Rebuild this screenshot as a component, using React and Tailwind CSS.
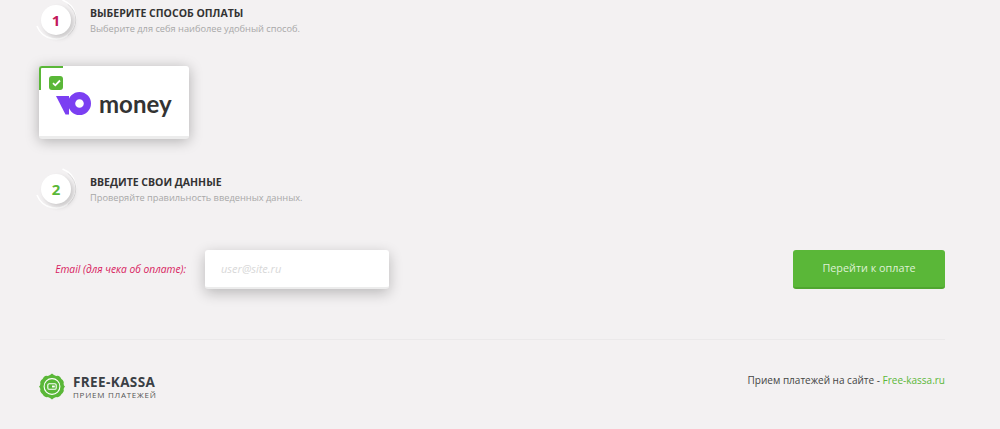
const StepBadge = ({ num, color }) => (
  <div className="relative w-[42px] h-[42px] flex items-center justify-center shrink-0">
    <svg className="absolute inset-0" width="42" height="42" viewBox="0 0 42 42" fill="none">
      <path d="M28 1.300A20 20 0 1 1 2.200 27.500" stroke="#ffffff" strokeWidth="1.500" strokeLinecap="round" />
      <path d="M33 5.500A19 19 0 0 1 33 36.500" stroke="#dedcdd" strokeWidth="1" strokeLinecap="round" />
    </svg>
    <div className={`relative w-[30px] h-[30px] rounded-full bg-white flex items-center justify-center text-[15px] font-bold shadow-[3px_3px_5px_rgba(0,0,0,0.16)] ${color}`}>
      {num}
    </div>
  </div>
)

const StepTitle = ({ num, color, title, text }) => (
  <div className="flex items-start">
    <StepBadge num={num} color={color} />
    <div className="ml-[13px] pt-[6px]">
      <div className="text-[10.500px] leading-[16.500px] font-bold text-[#333333] uppercase">{title}</div>
      <div className="text-[9.250px] leading-[14px] text-[#a8a8a8]">{text}</div>
    </div>
  </div>
)

const MoneyCard = () => (
  <div className="relative w-[150px] h-[73px] bg-white rounded-[3px] border-b-[3px] border-[#ececec] shadow-[0_2px_14px_rgba(0,0,0,0.28)] flex items-center pl-[17px] pt-[5px]">
    <div className="absolute left-0 top-0 w-[24px] h-[24px] border-t-[2px] border-l-[2px] border-[#5ab738] rounded-tl-[3px]" />
    <div className="absolute left-[10px] top-[10px] w-[14px] h-[14px] rounded-[3px] bg-[#5ab738] flex items-center justify-center">
      <svg width="9" height="8" viewBox="0 0 9 8" fill="none">
        <path d="M1 4.200L3.300 6.300L8 1.500" stroke="#ffffff" strokeWidth="1.800" />
      </svg>
    </div>
    <svg width="35" height="23" viewBox="0 0 35 23" className="shrink-0">
      <path d="M0 4H13V22.500H9.500L0 4Z" fill="#7b3ff2" />
      <path d="M23.500 0A11.500 11.500 0 1 1 23.500 23A11.500 11.500 0 0 1 23.500 0ZM23.500 7.200A4.300 4.300 0 1 0 23.500 15.800A4.300 4.300 0 0 0 23.500 7.200Z" fill="#7b3ff2" fillRule="evenodd" />
    </svg>
    <span className="ml-[8px] text-[24px] leading-[25px] font-bold text-[#333333] font-['Lato',sans-serif]">money</span>
  </div>
)

const KassaLogo = () => (
  <svg width="26" height="27" viewBox="0 0 28 28" className="shrink-0">
    <path d="M14 0Q16 2.200 18.500 2.600Q21 1.800 23 4Q24 6 25.500 7Q27.500 9.500 26.500 11Q26.500 13 28 14Q26.500 15.500 26.500 17Q27.500 19 25.500 21Q24 22 23 24Q21 26.200 18.500 25.400Q16 26 14 28Q12 26 9.500 25.400Q7 26.200 5 24Q4 22 2.500 21Q0.500 19 1.500 17Q1.500 15.500 0 14Q1.500 13 1.500 11Q0.500 9.500 2.500 7Q4 6 5 4Q7 1.800 9.500 2.600Q12 2.200 14 0Z" fill="#5ab738" />
    <circle cx="14" cy="14" r="8.500" fill="none" stroke="#ffffff" strokeWidth="1.200" />
    <rect x="9.500" y="11" width="9" height="6" rx="1.500" fill="none" stroke="#ffffff" strokeWidth="1.200" />
    <rect x="14" y="13" width="3" height="2" fill="#ffffff" />
  </svg>
)

export default function App() {
  return (
    <div className="min-h-[429px] bg-[#f3f1f2] pl-[40px] pr-[55px] font-['Open_Sans',sans-serif] overflow-hidden">
      <div className="-ml-[5px] -mt-[1px]">
        <StepTitle num="1" color="text-[#c2185b]" title="Выберите способ оплаты" text="Выберите для себя наиболее удобный способ." />
      </div>
      <div className="mt-[25px] -ml-[1px]">
        <MoneyCard />
      </div>
      <div className="mt-[29px] -ml-[5px]">
        <StepTitle num="2" color="text-[#5ab738]" title="Введите свои данные" text="Проверяйте правильность введенных данных." />
      </div>
      <div className="mt-[40px] flex items-center justify-between">
        <div className="flex items-center">
          <label className="w-[146px] text-right text-[10.250px] italic text-[#d81b60]">Email (для чека об оплате):</label>
          <input
            placeholder="user@site.ru"
            className="ml-[19px] w-[184px] h-[39px] px-[16px] bg-white rounded-[3px] border-b-[2px] border-[#ececec] text-[11px] italic outline-none placeholder:text-[#d8d8d8] shadow-[0_4px_14px_rgba(0,0,0,0.24)]"
          />
        </div>
        <button className="w-[152px] h-[39px] bg-[#5ab738] border-b-[2px] border-[#4fa62f] rounded-[3px] text-[10.800px] text-[#dff1d6]">
          Перейти к оплате
        </button>
      </div>
      <div className="mt-[50px] h-px bg-[#ebe9ea]" />
      <div className="mt-[33px] flex items-start justify-between">
        <div className="flex items-center -ml-[1px]">
          <KassaLogo />
          <div className="ml-[8px]">
            <div className="text-[13.500px] leading-[16px] font-bold text-[#3a3f45] tracking-[0.4px]">FREE-KASSA</div>
            <div className="text-[8px] leading-[10px] text-[#555555] tracking-[0.75px] uppercase">Прием платежей</div>
          </div>
        </div>
        <div className="text-[10px] leading-[14px] text-[#444444]">
          Прием платежей на сайте - <a className="text-[#5ab738]">Free-kassa.ru</a>
        </div>
      </div>
    </div>
  )
}
